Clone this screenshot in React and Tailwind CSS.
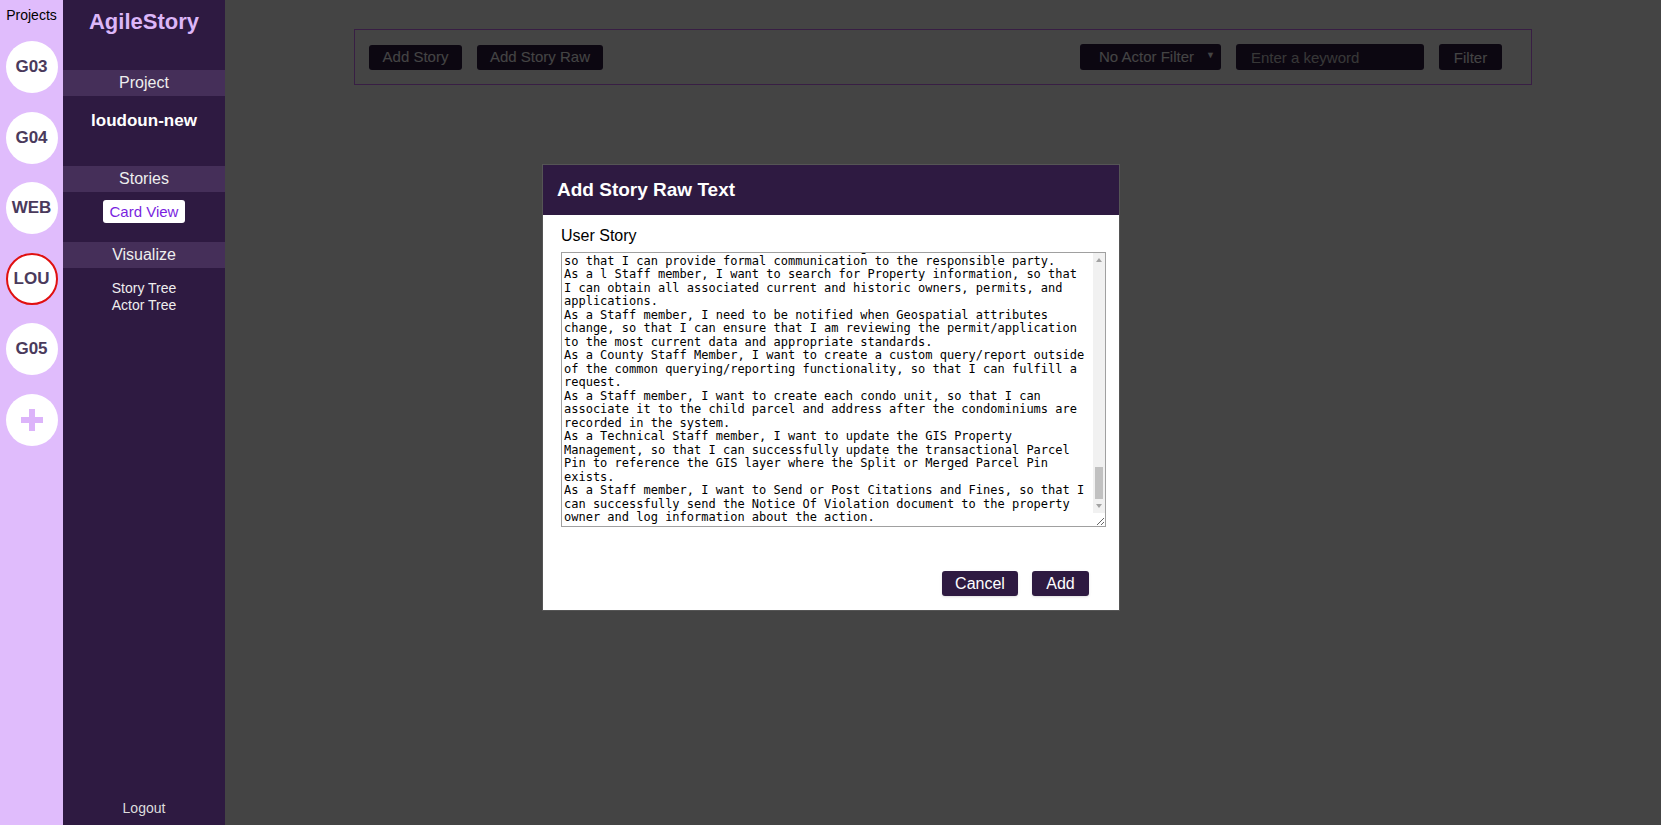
import { useLayoutEffect, useRef } from "react";

const projects = ["G03", "G04", "WEB", "LOU", "G05"];

const storyText = `As a Permit Technician, I want to record the application intake date,
so that I can track the review timeline for each permit.
As a Zoning Staff member, I want to view all zoning cases associated with
a parcel, so that I can determine the current zoning status.
As a Building Inspector, I want to schedule inspections from my mobile
device, so that I can manage my route while in the field.
As a Citizen, I want to check the status of my permit online, so that I
do not have to call the county office.
As a Cashier, I want to collect fees for multiple permits in a single
transaction, so that the applicant only has to pay once.
As a Plan Reviewer, I want to add comments to submitted plans, so that
the applicant knows which corrections are required.
As a Staff member, I want to attach documents to a case, so that all
supporting material is stored in one place.
As a Manager, I want to see a dashboard of open cases by department, so
that I can balance the workload of my staff.
As a Code Enforcement Officer, I want to log a complaint against a
property, so that the case can be investigated.
As a Staff member, I want to merge duplicate contacts, so that the
contact records remain accurate.
As a Code Enforcement Officer, I want to generate a Notice of Violation,
so that I can provide formal communication to the responsible party.
As a l Staff member, I want to search for Property information, so that
I can obtain all associated current and historic owners, permits, and
applications.
As a Staff member, I need to be notified when Geospatial attributes
change, so that I can ensure that I am reviewing the permit/application
to the most current data and appropriate standards.
As a County Staff Member, I want to create a custom query/report outside
of the common querying/reporting functionality, so that I can fulfill a
request.
As a Staff member, I want to create each condo unit, so that I can
associate it to the child parcel and address after the condominiums are
recorded in the system.
As a Technical Staff member, I want to update the GIS Property
Management, so that I can successfully update the transactional Parcel
Pin to reference the GIS layer where the Split or Merged Parcel Pin
exists.
As a Staff member, I want to Send or Post Citations and Fines, so that I
can successfully send the Notice Of Violation document to the property
owner and log information about the action.`;

const ProjectRail = () => {
  return (
    <div className="w-[63px] shrink-0 bg-[#e0bcfc] flex flex-col items-center">
      <div className="h-[30px] flex items-center text-[14px] text-black">Projects</div>
      <div className="flex flex-col gap-[18.5px] mt-[11px]">
        {projects.map((p) => (
          <div
            key={p}
            className={
              p === "LOU"
                ? "w-[52px] h-[52px] rounded-full bg-white border-2 border-[#e01010] flex items-center justify-center text-[17px] font-bold text-[#4a3a5c]"
                : "w-[52px] h-[52px] rounded-full bg-white flex items-center justify-center text-[17px] font-bold text-[#4a3a5c]"
            }
          >
            {p}
          </div>
        ))}
        {/* Add project */}
        <div className="w-[52px] h-[52px] rounded-full bg-white flex items-center justify-center">
          <svg width="22" height="22" viewBox="0 0 22 22">
            <rect x="8" y="0" width="6" height="22" fill="#dcb4fa" />
            <rect x="0" y="8" width="22" height="6" fill="#dcb4fa" />
          </svg>
        </div>
      </div>
    </div>
  );
};

const Sidebar = () => {
  return (
    <div className="w-[162px] shrink-0 bg-[#2e1a41] flex flex-col text-white">
      <div className="h-[70px] pt-[5px] text-center text-[22px] font-bold text-[#dcb6f8]">AgileStory</div>

      <div className="h-[26px] bg-[#452f59] flex items-center justify-center text-[16px] text-[#eeeeee]">Project</div>
      <div className="h-[70px] pt-[12px] text-center text-[17px] font-bold">loudoun-new</div>

      <div className="h-[26px] bg-[#452f59] flex items-center justify-center text-[16px] text-[#eeeeee]">Stories</div>
      <div className="h-[50px] pt-[8px] flex justify-center">
        <button className="h-[23px] px-[7px] bg-white rounded-[3px] text-[15px] leading-none text-[#7a1fe0]">Card View</button>
      </div>

      <div className="h-[26px] bg-[#452f59] flex items-center justify-center text-[16px] text-[#eeeeee]">Visualize</div>
      <div className="pt-[12px] flex flex-col items-center text-[14px] leading-[17px] text-[#eeeeee]">
        <span>Story Tree</span>
        <span>Actor Tree</span>
      </div>

      <div className="mt-auto pb-[6px] text-center text-[14px] text-[#dddddd]">Logout</div>
    </div>
  );
};

const Modal = () => {
  const ref = useRef(null);

  useLayoutEffect(() => {
    if (ref.current) ref.current.scrollTop = ref.current.scrollHeight;
  }, []);

  return (
    <div className="absolute left-[317px] top-[164px] w-[578px] bg-white border border-[#555555]">
      <div className="h-[50px] bg-[#2e1a41] flex items-center px-[14px] text-[19px] font-bold text-white">
        Add Story Raw Text
      </div>
      <div className="pl-[18px] pr-[12px] pt-[12px] pb-[14px]">
        <div className="text-[16px] leading-[18px] text-black mb-[7px]">User Story</div>
        <div className="relative w-[545px] h-[275px]">
          <textarea
            ref={ref}
            defaultValue={storyText}
            className="block w-full h-full border border-[#a0a0a0] pt-[2px] px-[2px] pb-[1px] text-[12px] leading-[13.5px] text-black outline-none"
            style={{ fontFamily: '"DejaVu Sans Mono", monospace' }}
          />
          {/* scrollbar */}
          <div className="absolute right-[1px] top-[1px] bottom-[14px] w-[12px] bg-[#f1f1f1] pointer-events-none">
            <svg className="absolute left-[3px] top-[5px]" width="6" height="4" viewBox="0 0 6 4">
              <path d="M3 0 L6 4 L0 4 Z" fill="#a3a3a3" />
            </svg>
            <div className="absolute left-[2px] right-[2px] top-[214px] h-[32px] bg-[#c1c1c1]" />
            <svg className="absolute left-[3px] bottom-[5px]" width="6" height="4" viewBox="0 0 6 4">
              <path d="M0 0 L6 0 L3 4 Z" fill="#a3a3a3" />
            </svg>
          </div>
        </div>
        <div className="flex justify-end gap-[14px] mt-[44px] pr-[18px]">
          <button className="w-[76px] h-[25px] rounded-[3px] bg-[#2e1a41] text-white text-[16px] shadow">Cancel</button>
          <button className="w-[57px] h-[25px] rounded-[3px] bg-[#2e1a41] text-white text-[16px] shadow">Add</button>
        </div>
      </div>
    </div>
  );
};

const App = () => {
  return (
    <div className="flex h-screen overflow-hidden" style={{ fontFamily: '"Liberation Sans", Arial, sans-serif' }}>
      <ProjectRail />
      <Sidebar />

      <div className="relative flex-1 bg-white">
        {/* Toolbar */}
        <div className="mx-[129px] mt-[29px] h-[56px] border border-[#d070ff] flex items-center px-[14px]">
          <div className="flex gap-[15px]">
            <button className="w-[93px] h-[25px] rounded-[3px] bg-[#2e1a41] text-white text-[15px]">Add Story</button>
            <button className="w-[126px] h-[25px] rounded-[3px] bg-[#2e1a41] text-white text-[15px]">Add Story Raw</button>
          </div>
          <div className="ml-auto flex items-center gap-[15px] mr-[15px]">
            <div className="relative w-[141px] h-[26px] rounded-[3px] bg-[#2e1a41] flex items-center pl-[19px] text-[15px] text-white">
              No Actor Filter
              <span className="absolute right-[6px] top-[5px] text-[9px]">▼</span>
            </div>
            <input
              placeholder="Enter a keyword"
              className="w-[188px] h-[26px] rounded-[3px] bg-[#2e1a41] pl-[15px] text-[15px] text-white placeholder:text-[#cfcfcf] outline-none"
            />
            <button className="w-[63px] h-[26px] rounded-[3px] bg-[#2e1a41] text-white text-[15px] leading-none">Filter</button>
          </div>
        </div>

        {/* Overlay */}
        <div className="absolute inset-0 bg-black/[0.733]">
          <Modal />
        </div>
      </div>
    </div>
  );
};

export default App;
